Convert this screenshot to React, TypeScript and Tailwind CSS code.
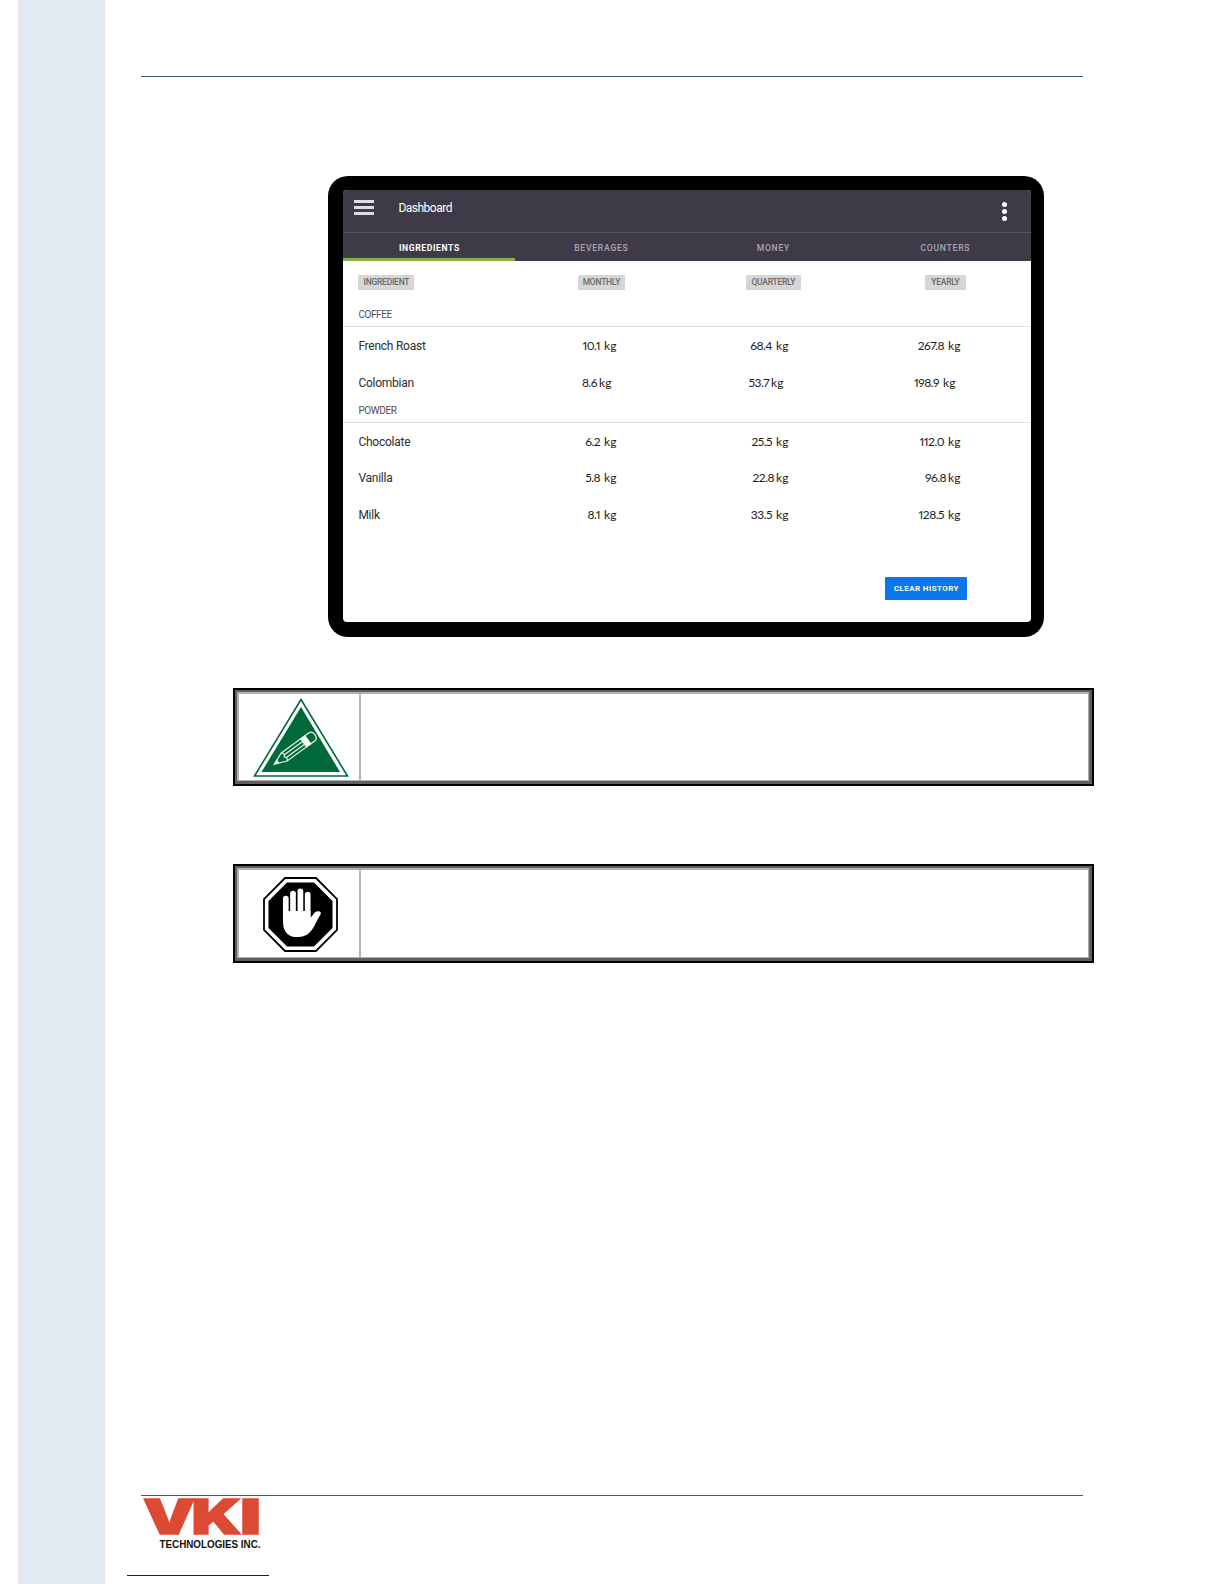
import React from 'react';

type Amount = {
  value: string;
  tight?: boolean;
};

type Row = {
  name: string;
  amounts: Amount[];
};

const tabs = ['INGREDIENTS', 'BEVERAGES', 'MONEY', 'COUNTERS'];

const coffee: Row[] = [
  { name: 'French Roast', amounts: [{ value: '10.1' }, { value: '68.4' }, { value: '267.8' }] },
  { name: 'Colombian', amounts: [{ value: '8.6', tight: true }, { value: '53.7', tight: true }, { value: '198.9' }] },
];

const powder: Row[] = [
  { name: 'Chocolate', amounts: [{ value: '6.2' }, { value: '25.5' }, { value: '112.0' }] },
  { name: 'Vanilla', amounts: [{ value: '5.8' }, { value: '22.8', tight: true }, { value: '96.8', tight: true }] },
  { name: 'Milk', amounts: [{ value: '8.1' }, { value: '33.5' }, { value: '128.5' }] },
];

const Badge = ({ label, width }: { label: string; width: string }) => (
  <span
    className={`flex h-[15px] items-center justify-center rounded-[1px] bg-[#d6d6d6] font-[Roboto] text-[8.5px] font-medium tracking-[-0.25px] text-[#6a6a6a] ${width}`}
  >
    {label}
  </span>
);

const SectionTitle = ({ label }: { label: string }) => (
  <div className="flex h-6 items-center border-b border-[#dfdfdf] pl-[15px] font-[Roboto] text-[10px] tracking-[-0.4px] text-[#505050]">
    {label}
  </div>
);

const IngredientRow = ({ row, shift }: { row: Row; shift?: boolean }) => (
  <div className="grid h-[36.4px] grid-cols-4 items-center pt-[2px]">
    <span className="pl-[15px] font-[Roboto] text-[12px] tracking-[-0.25px] text-[#2e2e2e]">{row.name}</span>
    {row.amounts.map((amount, i) => (
      <span
        key={i}
        className={`flex justify-end font-[Lato] text-[12px] proportional-nums tracking-[-0.5px] text-[#1c1c1c] ${
          shift ? 'pr-[76px]' : 'pr-[71px]'
        } ${amount.tight ? 'gap-[2px]' : 'gap-[4px]'}`}
      >
        <span>{amount.value}</span>
        <span className="tracking-normal">kg</span>
      </span>
    ))}
  </div>
);

const Tablet = () => (
  <div className="h-[461px] w-[716px] rounded-[20px] bg-black py-[14px] pl-[15px] pr-[13px]">
    <div className="flex h-[432px] w-[688px] flex-col overflow-hidden rounded-[4px] bg-white">
      {/* App bar */}
      <div className="flex h-[43px] justify-between border-b border-[#56525f] bg-[#3f3a47]">
        <div className="flex">
          <div className="ml-[11px] mt-[10px] flex h-[15px] w-5 flex-col justify-between">
            <div className="h-[3px] bg-[#dfdce5]"></div>
            <div className="h-[3px] bg-[#dfdce5]"></div>
            <div className="h-[3px] bg-[#dfdce5]"></div>
          </div>
          <span className="ml-[24px] mt-[9px] font-[Roboto] text-[12px] leading-[18px] tracking-[-0.5px] text-white">
            Dashboard
          </span>
        </div>
        <div className="mr-6 mt-[12px] flex h-[19px] w-[5px] flex-col justify-between">
          <div className="h-[5px] w-[5px] rounded-full bg-white"></div>
          <div className="h-[5px] w-[5px] rounded-full bg-white"></div>
          <div className="h-[5px] w-[5px] rounded-full bg-white"></div>
        </div>
      </div>

      {/* Tabs */}
      <div className="grid h-[28px] grid-cols-4 bg-[#3f3a47] font-[Roboto] text-[8.6px]">
        {tabs.map((tab, i) => (
          <div
            key={tab}
            className={`flex items-center justify-center border-b-[3px] pt-[6px] ${
              i === 0
                ? 'border-[#84b145] font-bold tracking-[0.6px] text-white'
                : 'border-transparent font-medium tracking-[0.75px] text-[#a9a5b2]'
            }`}
          >
            {tab}
          </div>
        ))}
      </div>

      {/* Column labels */}
      <div className="mt-[14px] grid grid-cols-4">
        <div className="pl-[15px]">
          <Badge label="INGREDIENT" width="w-[56px]" />
        </div>
        <div className="flex justify-center">
          <Badge label="MONTHLY" width="w-[47px]" />
        </div>
        <div className="flex justify-center">
          <Badge label="QUARTERLY" width="w-[55px]" />
        </div>
        <div className="flex justify-center">
          <Badge label="YEARLY" width="w-[41px]" />
        </div>
      </div>

      <div className="mt-[13px]">
        <SectionTitle label="COFFEE" />
        <IngredientRow row={coffee[0]} />
        <IngredientRow row={coffee[1]} shift />
      </div>
      <div className="-mt-[1px]">
        <SectionTitle label="POWDER" />
        {powder.map((row) => (
          <IngredientRow key={row.name} row={row} />
        ))}
      </div>

      <button className="mr-16 mt-[45px] h-[23px] w-[82px] shrink-0 self-end rounded-[1px] bg-[#0a78ec] pt-px font-[Roboto] text-[8px] font-bold tracking-[0.4px] text-white">
        CLEAR HISTORY
      </button>
    </div>
  </div>
);

const PencilIcon = () => (
  <svg width="96" height="80" viewBox="0 0 96 80">
    <path d="M48 1.5 L94.5 78 H1.5 Z" fill="#fff" stroke="#00693a" strokeWidth="1.6" />
    <path d="M48 9 L87 74 H8.5 Z" fill="#00693a" />
    <g transform="translate(21.5 66) rotate(-36)" fill="none" stroke="#e9f5ee" strokeWidth="1.2">
      <path d="M0 0 L12 -5 H41 V5 H12 Z" />
      <path d="M12 -5 Q15 -2.5 12 0 Q15 2.5 12 5" />
      <path d="M13 -1.7 H36 M13 1.7 H36" />
      <path d="M0 0 L4 -1.6 V1.6 Z" fill="#fff" />
      <path d="M36 -5 H41 V5 H36 Z" fill="#fff" />
      <path d="M41 -5 H46 Q50 -5 50 0 Q50 5 46 5 H41" />
    </g>
  </svg>
);

const StopIcon = () => (
  <svg width="75" height="75" viewBox="0 0 75 75">
    <path d="M22 1 H53 L74 22 V53 L53 74 H22 L1 53 V22 Z" fill="#fff" stroke="#000" strokeWidth="1.8" />
    <path d="M24 5.5 H51 L69.5 24 V51 L51 69.5 H24 L5.5 51 V24 Z" fill="#000" />
    <g stroke="#fff" strokeWidth="5.7" strokeLinecap="round" fill="none">
      <path d="M22.8 21.5 V42" />
      <path d="M30 16.5 V40" />
      <path d="M37.4 14.3 V40" />
      <path d="M44.7 17.5 V40" />
    </g>
    <path
      d="M20 34 H47.5 V41 C50 38 51.5 34.8 54.5 34.3 C57.5 34 58.5 35.5 57.5 37.5 C53 45 51 51 47 55 C42 61 30 61.5 25 57.5 C21 54 20 49 20 44 Z"
      fill="#fff"
    />
  </svg>
);

const NoteBox = ({ children, height }: { children: React.ReactNode; height: string }) => (
  <div className={`w-[861px] border-2 border-black ${height}`}>
    <div className="h-full border-2 border-b-[3px] border-r-[3px] border-[#606060]">
      <div className="flex h-full border-2 border-b border-r border-[#b0b0b0]">
        <div className="flex w-[120px] shrink-0 justify-center pl-[3px]">{children}</div>
        <div className="w-[2px] bg-[repeating-linear-gradient(to_bottom,#999_0px,#999_1px,#ccc_1px,#ccc_2px)]"></div>
      </div>
    </div>
  </div>
);

const Logo = () => (
  <svg width="122" height="54" viewBox="0 0 122 54" className="overflow-visible font-[Inter]">
    <g fill="#dc4a33" stroke="#dc4a33" strokeWidth="1.5" fontSize="48" fontWeight="900">
      <text x="1" y="38" textLength="52" lengthAdjust="spacingAndGlyphs">V</text>
      <text x="49.5" y="38" textLength="50" lengthAdjust="spacingAndGlyphs">K</text>
      <text x="98" y="38" textLength="21" lengthAdjust="spacingAndGlyphs">I</text>
    </g>
    <text
      x="17.5"
      y="52.3"
      textLength="101"
      lengthAdjust="spacingAndGlyphs"
      fontSize="11"
      fontWeight="700"
      fontFamily="Liberation Sans, sans-serif"
      fill="#111"
    >
      TECHNOLOGIES INC.
    </text>
  </svg>
);

const App = () => {
  return (
    <div className="flex h-[1584px] w-[1224px] overflow-hidden bg-white pl-[18px] font-['Liberation_Sans',sans-serif]">
      <div className="w-[87px] shrink-0 border-x-4 border-[#e4e7ee] bg-[#e1e9f2]"></div>

      <div className="flex flex-1 flex-col">
        <div className="ml-9 mt-[76px] h-px w-[942px] bg-[#3c5c7c]"></div>

        <div className="ml-[223.4px] mt-[99px]">
          <Tablet />
        </div>

        <div className="ml-32 mt-[51px]">
          <NoteBox height="h-[98px]">
            <div className="pt-[4px]">
              <PencilIcon />
            </div>
          </NoteBox>
        </div>

        <div className="ml-32 mt-[78px]">
          <NoteBox height="h-[99px]">
            <div className="pt-[7px]">
              <StopIcon />
            </div>
          </NoteBox>
        </div>

        <footer className="mt-auto">
          <div className="ml-9 h-px w-[942px] bg-[#3c5c7c]"></div>
          <div className="ml-[37px] h-[54px]">
            <Logo />
          </div>
          <div className="mb-[8px] ml-[22px] mt-[25px] h-px w-[142px] bg-[#0a1496]"></div>
        </footer>
      </div>
    </div>
  );
};

export default App;
